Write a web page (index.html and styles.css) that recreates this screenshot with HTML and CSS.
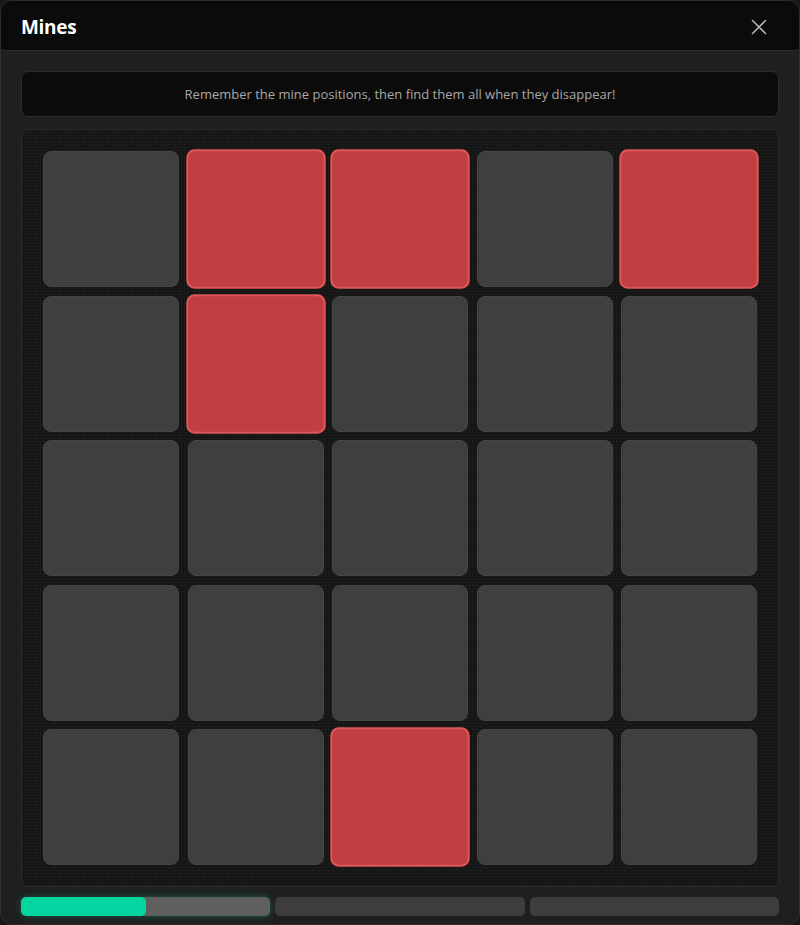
FILE: index.html
```html
<!DOCTYPE html>
<html lang="en">
<head>
    <meta charset="UTF-8">
    <meta name="viewport" content="width=device-width, initial-scale=1.0">
    <title>Mines</title>
    <link rel="stylesheet" href="styles.css">
</head>
<body>
    <div class="modal">
        <div class="modal-header">
            <h1>Mines</h1>
            <button class="close-btn" aria-label="Close">
                <svg width="16" height="16" viewBox="0 0 16 16"><path d="M1.5 1.5L14.5 14.5M14.5 1.5L1.5 14.5" stroke="#b0b0b0" stroke-width="1.6" stroke-linecap="round"/></svg>
            </button>
        </div>

        <div class="modal-body">
            <div class="hint">Remember the mine positions, then find them all when they disappear!</div>

            <div class="board">
                <div class="tile"></div>
                <div class="tile mine"></div>
                <div class="tile mine"></div>
                <div class="tile"></div>
                <div class="tile mine"></div>

                <div class="tile"></div>
                <div class="tile mine"></div>
                <div class="tile"></div>
                <div class="tile"></div>
                <div class="tile"></div>

                <div class="tile"></div>
                <div class="tile"></div>
                <div class="tile"></div>
                <div class="tile"></div>
                <div class="tile"></div>

                <div class="tile"></div>
                <div class="tile"></div>
                <div class="tile"></div>
                <div class="tile"></div>
                <div class="tile"></div>

                <div class="tile"></div>
                <div class="tile"></div>
                <div class="tile mine"></div>
                <div class="tile"></div>
                <div class="tile"></div>
            </div>

            <div class="rounds">
                <div class="round active"><div class="round-fill" style="width: 50%"></div></div>
                <div class="round"></div>
                <div class="round"></div>
            </div>
        </div>
    </div>
</body>
</html>
```

FILE: styles.css
```css
* {
    box-sizing: border-box;
    margin: 0;
    padding: 0;
}

html, body {
    height: 100%;
}

body {
    background: #181818;
    font-family: "Segoe UI", "Open Sans", "Noto Sans", Arial, sans-serif;
    color: #fff;
}

.modal {
    height: 925px;
    background: #1f1f1f;
    border: 1px solid #2e2e2e;
    border-radius: 12px;
    overflow: hidden;
    display: flex;
    flex-direction: column;
}

.modal-header {
    height: 50px;
    flex-shrink: 0;
    background: #0b0b0b;
    border-bottom: 1px solid #2c2c2c;
    display: flex;
    align-items: center;
    justify-content: space-between;
    padding: 2px 32px 0 20px;
}

.modal-header h1 {
    font-size: 19px;
    font-weight: 700;
    letter-spacing: -0.3px;
}

.close-btn {
    background: none;
    border: none;
    cursor: pointer;
    display: flex;
    width: 16px;
    height: 16px;
}

.modal-body {
    padding: 20px 20px 0;
    display: flex;
    flex-direction: column;
}

.hint {
    height: 46px;
    background: #0b0b0b;
    border: 1px solid #2c2c2c;
    border-radius: 7px;
    display: flex;
    align-items: center;
    justify-content: center;
    font-size: 13px;
    color: #a8a8a8;
}

.board {
    margin-top: 12px;
    background-color: #141414;
    background-image:
        repeating-linear-gradient(0deg, rgba(255,255,255,0.025) 0 1px, transparent 1px 3px),
        repeating-linear-gradient(90deg, rgba(255,255,255,0.025) 0 1px, transparent 1px 3px);
    border: 1px solid #2c2c2c;
    border-radius: 7px;
    padding: 21px;
    display: grid;
    grid-template-columns: repeat(5, 136px);
    grid-auto-rows: 136px;
    gap: 8.5px;
}

.tile {
    background: #3e3f3f;
    border: 1px solid #444646;
    border-radius: 8px;
}

.tile.mine {
    background: #c04042;
    border: 2px solid #e05557;
    transform: scale(1.025);
}

.rounds {
    margin-top: 10px;
    display: grid;
    grid-template-columns: repeat(3, 1fr);
    gap: 5px;
}

.round {
    height: 19px;
    background: #3d3d3d;
    border-radius: 5px;
    overflow: hidden;
}

.round.active {
    background: #5f5f5f;
    box-shadow: 0 0 6px rgba(0, 212, 160, 0.35);
}

.round-fill {
    height: 100%;
    background: #03d4a0;
    border-radius: 5px;
}
```
